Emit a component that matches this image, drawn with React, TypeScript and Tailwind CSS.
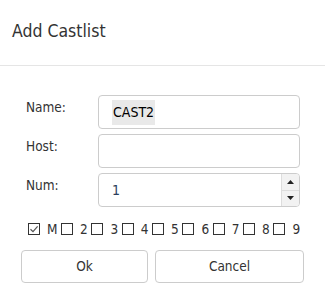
import React from "react";

const font = { fontFamily: '"DejaVu Sans Condensed", "DejaVu Sans", sans-serif' };

const boxes = ["M", "2", "3", "4", "5", "6", "7", "8", "9"];

function Box({ checked }: { checked?: boolean }) {
  return (
    <span className="flex h-[12px] w-[12px] shrink-0 items-center justify-center border border-[#333] bg-white">
      {checked && (
        <svg width="10" height="10" viewBox="0 0 10 10">
          <path d="M1.5 5.2 L4 7.6 L8.6 2.4" fill="none" stroke="#555" strokeWidth="1.2" />
        </svg>
      )}
    </span>
  );
}

function Field({ label, children }: { label: string; children: React.ReactNode }) {
  return (
    <div className="flex items-start">
      <label className="w-[72px] shrink-0 pt-[2px] text-[13.5px] text-[#333]">{label}</label>
      {children}
    </div>
  );
}

export default function App() {
  return (
    <div className="h-[305px] w-[325px] bg-white text-[#333]" style={font}>
      <div className="flex h-[66px] items-center border-b border-[#e5e5e5] px-3 pb-[2px]">
        <h2 className="text-[17.5px] text-[#333]">Add Castlist</h2>
      </div>

      <div className="flex flex-col gap-[5px] pl-[26px] pr-[25px] pt-[29px]">
        <Field label="Name:">
          <div className="flex h-[34px] flex-1 items-center rounded-[4px] border border-[#ccc] pl-[13px] text-[14px] text-black">
            <span className="bg-[#e9e9e9] px-px py-[2px]">CAST2</span>
          </div>
        </Field>
        <Field label="Host:">
          <div className="h-[34px] flex-1 rounded-[4px] border border-[#ccc]" />
        </Field>
        <Field label="Num:">
          <div className="flex h-[34px] flex-1 overflow-hidden rounded-[4px] border border-[#ccc]">
            <div className="flex flex-1 items-center pl-[13px] text-[14px] text-[#2c3e5c]">1</div>
            <div className="flex w-[18px] flex-col border-l border-[#ddd] bg-[#f2f2f2]">
              <div className="flex flex-1 items-center justify-center border-b border-[#ddd]">
                <svg width="7" height="4" viewBox="0 0 7 4">
                  <path d="M0 4 L3.5 0 L7 4 Z" fill="#222" />
                </svg>
              </div>
              <div className="flex flex-1 items-center justify-center">
                <svg width="7" height="4" viewBox="0 0 7 4">
                  <path d="M0 0 L3.5 4 L7 0 Z" fill="#222" />
                </svg>
              </div>
            </div>
          </div>
        </Field>
      </div>

      <div className="mt-[16px] flex items-center gap-[3.6px] pl-[28px] text-[13.5px] leading-[12px]">
        {boxes.map((b, i) => (
          <div key={b} className="flex items-center gap-[7px]">
            <Box checked={i === 0} />
            <span>{b}</span>
          </div>
        ))}
      </div>

      <div className="mt-[15px] flex gap-[7px] pl-[21px]">
        <button className="h-[33px] w-[127px] rounded-[4px] border border-[#ccc] bg-white text-[13.5px] text-[#333]">
          Ok
        </button>
        <button className="h-[33px] w-[149px] rounded-[4px] border border-[#ccc] bg-white text-[13.5px] text-[#333]">
          Cancel
        </button>
      </div>
    </div>
  );
}
